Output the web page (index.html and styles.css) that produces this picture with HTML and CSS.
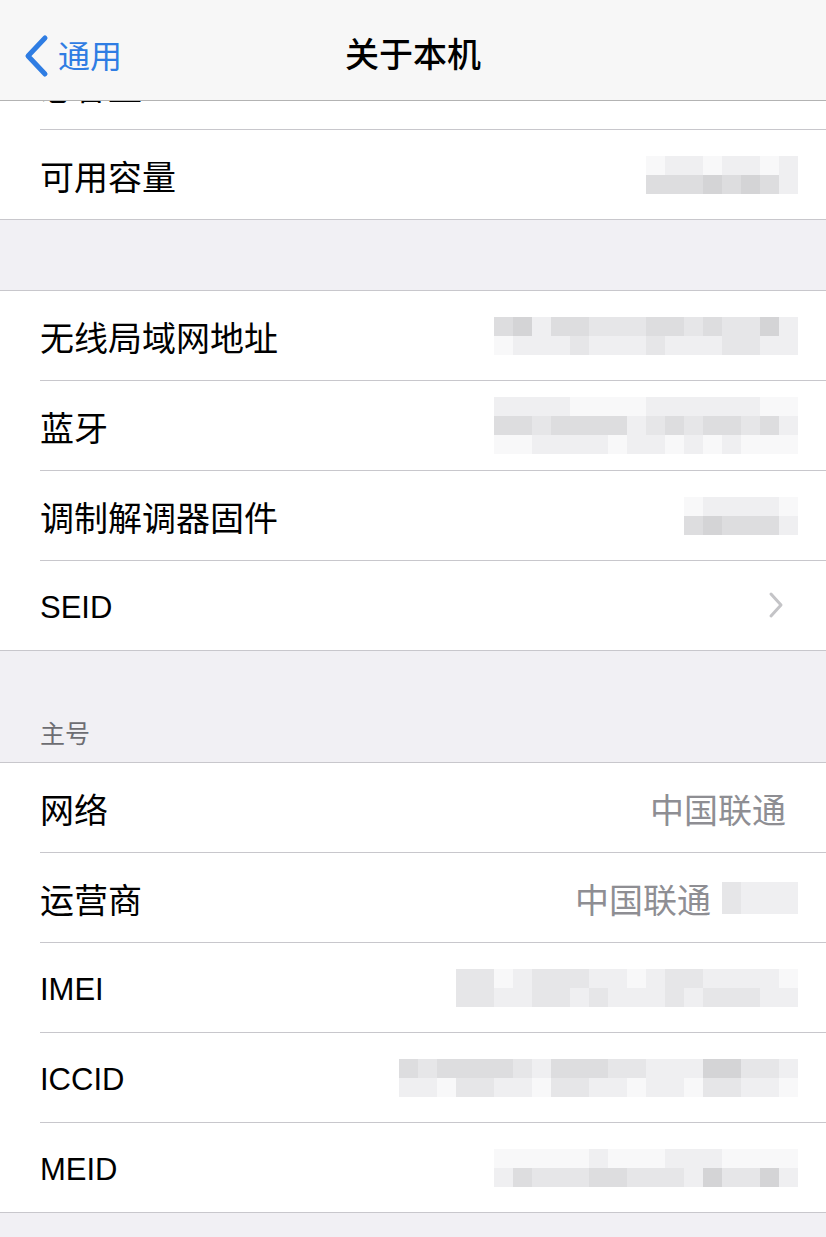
FILE: index.html
```html
<!DOCTYPE html>
<html lang="zh-CN">
<head>
<meta charset="utf-8">
<title>关于本机</title>
<link rel="stylesheet" href="styles.css">
</head>
<body>
<header class="nav">
  <a class="back">
    <svg class="back-icon" width="26" height="44" viewBox="0 0 26 44"><polyline points="22,4 5,22 22,40" fill="none" stroke="#2f7de3" stroke-width="5" stroke-linecap="round" stroke-linejoin="round"/></svg>
    <span class="back-text">通用</span>
  </a>
  <h1 class="title">关于本机</h1>
  <span class="nav-spacer"></span>
</header>

<main class="page">
  <section class="group first">
    <div class="row"><span class="label">总容量</span></div>
    <div class="row">
      <span class="label">可用容量</span>
      <span class="blur">
        <span class="br"><i class="s0"></i><i class="s1"></i><i class="s1"></i><i class="s0"></i><i class="s1"></i><i class="s1"></i><i class="s0"></i><i class="s1"></i></span>
        <span class="br"><i class="s3"></i><i class="s3"></i><i class="s3"></i><i class="s4"></i><i class="s3"></i><i class="s4"></i><i class="s3"></i><i class="s1"></i></span>
      </span>
    </div>
  </section>

  <div class="gap"></div>

  <section class="group">
    <div class="row">
      <span class="label">无线局域网地址</span>
      <span class="blur">
        <span class="br"><i class="s3"></i><i class="s4"></i><i class="s1"></i><i class="s3"></i><i class="s3"></i><i class="s2"></i><i class="s2"></i><i class="s2"></i><i class="s3"></i><i class="s3"></i><i class="s2"></i><i class="s3"></i><i class="s2"></i><i class="s2"></i><i class="s4"></i><i class="s1"></i></span>
        <span class="br"><i class="s0"></i><i class="s1"></i><i class="s1"></i><i class="s1"></i><i class="s2"></i><i class="s1"></i><i class="s1"></i><i class="s1"></i><i class="s2"></i><i class="s1"></i><i class="s1"></i><i class="s1"></i><i class="s2"></i><i class="s2"></i><i class="s1"></i><i class="s1"></i></span>
      </span>
    </div>
    <div class="row">
      <span class="label">蓝牙</span>
      <span class="blur">
        <span class="br"><i class="s1"></i><i class="s1"></i><i class="s1"></i><i class="s1"></i><i class="s0"></i><i class="s0"></i><i class="s0"></i><i class="s0"></i><i class="s1"></i><i class="s1"></i><i class="s1"></i><i class="s1"></i><i class="s1"></i><i class="s1"></i><i class="s0"></i><i class="s0"></i></span>
        <span class="br"><i class="s3"></i><i class="s3"></i><i class="s2"></i><i class="s3"></i><i class="s3"></i><i class="s3"></i><i class="s3"></i><i class="s1"></i><i class="s2"></i><i class="s3"></i><i class="s2"></i><i class="s3"></i><i class="s3"></i><i class="s2"></i><i class="s3"></i><i class="s1"></i></span>
        <span class="br"><i class="s0"></i><i class="s0"></i><i class="s1"></i><i class="s1"></i><i class="s1"></i><i class="s1"></i><i class="s0"></i><i class="s1"></i><i class="s1"></i><i class="s0"></i><i class="s1"></i><i class="s0"></i><i class="s1"></i><i class="s0"></i><i class="s0"></i><i class="s0"></i></span>
      </span>
    </div>
    <div class="row">
      <span class="label">调制解调器固件</span>
      <span class="blur">
        <span class="br"><i class="s0"></i><i class="s1"></i><i class="s1"></i><i class="s1"></i><i class="s1"></i><i class="s0"></i></span>
        <span class="br"><i class="s3"></i><i class="s4"></i><i class="s3"></i><i class="s3"></i><i class="s3"></i><i class="s1"></i></span>
      </span>
    </div>
    <div class="row">
      <span class="label en">SEID</span>
      <svg class="chevron" width="16" height="28" viewBox="0 0 16 28"><polyline points="3,3 13,14 3,25" fill="none" stroke="#c4c4c7" stroke-width="3" stroke-linecap="round" stroke-linejoin="round"/></svg>
    </div>
  </section>

  <div class="section-head"><span class="head-text">主号</span></div>

  <section class="group">
    <div class="row">
      <span class="label">网络</span>
      <span class="value inset">中国联通</span>
    </div>
    <div class="row">
      <span class="label">运营商</span>
      <span class="value">中国联通</span>
      <span class="blur short">
        <span class="br tall"><i class="s2"></i><i class="s1"></i><i class="s1"></i><i class="s1"></i></span>
      </span>
    </div>
    <div class="row">
      <span class="label en">IMEI</span>
      <span class="blur">
        <span class="br"><i class="s2"></i><i class="s2"></i><i class="s0"></i><i class="s1"></i><i class="s2"></i><i class="s2"></i><i class="s2"></i><i class="s1"></i><i class="s1"></i><i class="s0"></i><i class="s1"></i><i class="s2"></i><i class="s2"></i><i class="s1"></i><i class="s1"></i><i class="s1"></i><i class="s1"></i><i class="s0"></i></span>
        <span class="br"><i class="s2"></i><i class="s2"></i><i class="s1"></i><i class="s1"></i><i class="s2"></i><i class="s2"></i><i class="s1"></i><i class="s2"></i><i class="s1"></i><i class="s1"></i><i class="s1"></i><i class="s2"></i><i class="s1"></i><i class="s2"></i><i class="s2"></i><i class="s2"></i><i class="s1"></i><i class="s1"></i></span>
      </span>
    </div>
    <div class="row">
      <span class="label en">ICCID</span>
      <span class="blur">
        <span class="br"><i class="s3"></i><i class="s2"></i><i class="s3"></i><i class="s3"></i><i class="s3"></i><i class="s3"></i><i class="s2"></i><i class="s1"></i><i class="s3"></i><i class="s3"></i><i class="s3"></i><i class="s2"></i><i class="s2"></i><i class="s1"></i><i class="s1"></i><i class="s1"></i><i class="s4"></i><i class="s4"></i><i class="s2"></i><i class="s2"></i><i class="s1"></i></span>
        <span class="br"><i class="s1"></i><i class="s1"></i><i class="s0"></i><i class="s2"></i><i class="s2"></i><i class="s1"></i><i class="s1"></i><i class="s0"></i><i class="s2"></i><i class="s2"></i><i class="s1"></i><i class="s1"></i><i class="s0"></i><i class="s1"></i><i class="s1"></i><i class="s0"></i><i class="s2"></i><i class="s2"></i><i class="s1"></i><i class="s1"></i><i class="s0"></i></span>
      </span>
    </div>
    <div class="row">
      <span class="label en">MEID</span>
      <span class="blur">
        <span class="br"><i class="s0"></i><i class="s0"></i><i class="s0"></i><i class="s0"></i><i class="s0"></i><i class="s1"></i><i class="s0"></i><i class="s0"></i><i class="s0"></i><i class="s1"></i><i class="s1"></i><i class="s1"></i><i class="s0"></i><i class="s0"></i><i class="s0"></i><i class="s0"></i></span>
        <span class="br"><i class="s1"></i><i class="s3"></i><i class="s2"></i><i class="s2"></i><i class="s2"></i><i class="s3"></i><i class="s3"></i><i class="s2"></i><i class="s2"></i><i class="s2"></i><i class="s1"></i><i class="s4"></i><i class="s2"></i><i class="s2"></i><i class="s4"></i><i class="s1"></i></span>
      </span>
    </div>
  </section>
</main>
</body>
</html>
```

FILE: styles.css
```css
* { box-sizing: border-box; }

html, body {
  margin: 0;
  padding: 0;
  background: #f1f0f4;
}

body {
  font-family: "Liberation Sans", "Noto Sans CJK SC", sans-serif;
  color: #000;
  width: 826px;
  min-height: 1237px;
  overflow: hidden;
}

/* navigation bar overlays the scrolled list */
.nav {
  position: fixed;
  top: 0;
  left: 0;
  right: 0;
  height: 101px;
  z-index: 10;
  background: #f7f7f7;
  border-bottom: 1px solid #b3b3b3;
  display: grid;
  grid-template-columns: 1fr auto 1fr;
  align-items: center;
  padding-top: 12px;
}

.back {
  display: flex;
  align-items: center;
  gap: 9px;
  padding-left: 23px;
  color: #2f7de3;
}

.back-icon { display: block; }

.back-text {
  font-family: "Noto Sans CJK SC", sans-serif;
  font-size: 32px;
  line-height: 1;
  margin-top: -4px;
}

.title {
  margin: 0;
  font-family: "Noto Sans CJK SC", sans-serif;
  font-size: 34px;
  font-weight: 500;
  line-height: 1;
  margin-top: -6px;
}

.page {
  padding-top: 40px;
}

.group {
  background: #fff;
  border-top: 1px solid #c8c7cc;
  border-bottom: 1px solid #c8c7cc;
}

.group.first { border-top: none; }

.row {
  height: 90px;
  margin-left: 40px;
  padding-right: 28px;
  padding-top: 3px;
  display: flex;
  align-items: center;
  border-bottom: 1px solid #c8c7cc;
}

.row:last-child {
  border-bottom: none;
  height: 89px;
}

.label {
  font-family: "Noto Sans CJK SC", sans-serif;
  font-size: 34px;
  line-height: 1;
  flex: 1;
  white-space: nowrap;
}

.label.en {
  font-family: "Liberation Sans", sans-serif;
  font-size: 31px;
}

.value {
  font-family: "Noto Sans CJK SC", sans-serif;
  font-size: 34px;
  line-height: 1;
  color: #8e8e93;
}

.value.inset { margin-right: 12px; }

.chevron {
  display: block;
  margin-right: 14px;
  margin-top: -4px;
}

.gap {
  height: 70px;
}

.section-head {
  height: 111px;
  display: flex;
  align-items: flex-end;
  padding-left: 40px;
  padding-bottom: 17px;
}

.head-text {
  font-family: "Noto Sans CJK SC", sans-serif;
  font-size: 25px;
  line-height: 1;
  color: #6d6d72;
}

/* pixelated (mosaic) values */
.blur {
  display: flex;
  flex-direction: column;
  margin-top: -3px;
}

.blur.short { margin-left: 11px; }

.br {
  display: flex;
  height: 19px;
}

.br.tall { height: 32px; }

.br i {
  display: block;
  width: 19px;
  height: 100%;
}

.s0 { background: #f8f8f9; }
.s1 { background: #efeff1; }
.s2 { background: #e6e6e8; }
.s3 { background: #dddddf; }
.s4 { background: #d4d4d6; }
```
